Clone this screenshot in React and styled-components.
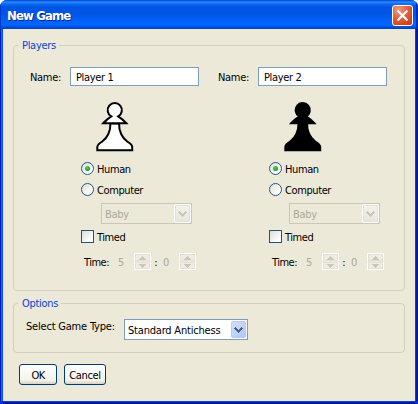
import React from "react";
import styled, { createGlobalStyle, css } from "styled-components";

const Page = createGlobalStyle`
  * { box-sizing: border-box; }
  body { margin: 0; background: #fff; overflow: hidden; }
`;

const Window = styled.div`
  width: 418px;
  height: 404px;
  display: flex;
  flex-direction: column;
  font: 11px/14px "DejaVu Sans Condensed", "DejaVu Sans", sans-serif;
  font-stretch: condensed;
  color: #000;
  background: #0831d9;
  border-radius: 7px 7px 0 0;
  overflow: hidden;
`;

const TitleBar = styled.header`
  height: 29px;
  flex: none;
  display: flex;
  align-items: center;
  justify-content: space-between;
  padding: 2px 5px 0 7px;
  background: linear-gradient(#0040d0 0, #2a8bff 2px, #0a6cf5 4px, #0054e3 7px, #0055e5 14px, #0261fc 21px, #0264ff 25px, #0050dc 27px, #003dc4 29px);
  box-shadow: inset 1px 0 #0038c8, inset -2px 0 #0030b8;
`;

const Title = styled.h1`
  margin: 0;
  padding-top: 1px;
  font: bold 13px/16px "DejaVu Sans Condensed", "DejaVu Sans", sans-serif;
  font-stretch: condensed;
  letter-spacing: -0.85px;
  color: #fff;
  text-shadow: 1px 1px #0a2a88;
`;

const CloseButton = styled.button`
  width: 21px;
  height: 21px;
  padding: 0;
  display: grid;
  place-items: center;
  border: 1px solid #fff;
  border-radius: 3px;
  background: radial-gradient(circle at 30% 20%, #f09a80 0, #e35e3c 45%, #d9401a 80%, #b83210 100%);
`;

const Client = styled.main`
  flex: 1;
  margin: 0 3px 3px;
  padding: 9px 10px 0;
  background: #ece9d8;
  box-shadow: -1px 0 #0855dd, -2px 0 #166aee, -3px 0 #0019cf, 1px 0 #0b3bd8, 2px 0 #001dae, 3px 0 #00138c, 0 1px #0441d8, 0 2px #001dae, 0 3px #00138c;
`;

const Group = styled.fieldset`
  margin: 0 0 ${p => p.$gap}px;
  padding: 0;
  width: 392px;
  height: ${p => p.$height}px;
  min-width: 0;
  border: 1px solid #d0d0bf;
  border-radius: 4px;
`;

const Legend = styled.legend`
  margin-left: 4px;
  padding: 0 3px 0 4px;
  height: 14px;
  line-height: 16px;
  color: #0046d5;
  letter-spacing: ${p => p.$track || 0}px;
`;

const PlayerColumns = styled.div`
  display: grid;
  grid-template-columns: 188px 188px;
  padding-top: 15px;
`;

const Text = styled.span`
  padding-top: 2px;
  white-space: pre;
  letter-spacing: ${p => p.$track || 0}px;
  ${p => p.$width && css`width: ${p.$width}px; flex: none;`}
  ${p => p.$muted && css`color: #aca899;`}
`;

const OptionLabel = styled(Text)`
  padding-top: 1px;
`;

const NameRow = styled.label`
  display: flex;
  align-items: center;
  height: 19px;
  padding-left: 16px;
`;

const NameInput = styled.input`
  width: 129px;
  height: 19px;
  padding: 2px 4px 0 5px;
  border: 1px solid #7f9db9;
  border-radius: 0;
  background: #fff;
  font: inherit;
  letter-spacing: -0.35px;
  color: #000;
  outline: 0;
`;

const Piece = styled.svg`
  display: block;
  width: 40px;
  height: 51px;
  margin: 16px 0 0 81px;
`;

const Choice = styled.div`
  display: flex;
  align-items: center;
  gap: 3px;
  height: 13px;
  margin: ${p => p.$top}px 0 0 67px;
`;

const Radio = styled.span`
  width: 13px;
  height: 13px;
  flex: none;
  display: grid;
  place-items: center;
  border: 1px solid #28567f;
  border-radius: 50%;
  background: linear-gradient(135deg, #dcdcd7, #fff 75%);
  &::after {
    content: "";
    width: 5px;
    height: 5px;
    border-radius: 50%;
    background: ${p => (p.$on ? "radial-gradient(circle at 40% 35%, #55d551, #21a121 65%)" : "none")};
  }
`;

const CheckBox = styled.span`
  width: 13px;
  height: 13px;
  flex: none;
  border: 1px solid #1c5180;
  background: linear-gradient(135deg, #dcdcd7, #fff 80%);
`;

const Combo = styled.div`
  display: flex;
  align-items: center;
  justify-content: space-between;
  width: ${p => p.$width}px;
  height: 21px;
  padding: 0 1px 0 3px;
  border: 1px solid ${p => (p.$disabled ? "#c9c7ba" : "#7f9db9")};
  background: ${p => (p.$disabled ? "#ece9d8" : "#fff")};
`;

const DifficultyRow = styled.div`
  margin: 7px 0 6px 87px;
`;

const ComboButton = styled.span`
  width: ${p => (p.$disabled ? 17 : 15)}px;
  height: ${p => (p.$disabled ? 19 : 17)}px;
  margin-right: ${p => (p.$disabled ? -1 : 0)}px;
  display: grid;
  place-items: center;
  border-radius: 2px;
  border: 1px solid ${p => (p.$disabled ? "#fff" : "#b7caf5")};
  background: ${p => (p.$disabled ? "linear-gradient(#f3f2eb, #e9e7da)" : "linear-gradient(135deg, #d3dffe, #aec8f7)")};
  box-shadow: ${p => (p.$disabled ? "inset 0 0 0 1px #e3e1d5" : "none")};
`;

const TimeRow = styled.div`
  display: flex;
  align-items: center;
  height: 17px;
  margin: 10px 0 0 70px;
`;

const Spinner = styled.span`
  width: 17px;
  height: 17px;
  flex: none;
  display: grid;
  grid-template-rows: 8px 8px;
  gap: 1px;
  background: #ece9d8;
`;

const SpinButton = styled.span`
  display: grid;
  place-items: center;
  border: solid #fff;
  border-width: ${p => (p.$down ? "0 1px 1px" : "1px 1px 0")};
  background: #efede3;
  box-shadow: inset 0 0 0 1px #e3e1d5;
`;

const OptionRow = styled.div`
  display: flex;
  align-items: flex-start;
  padding: 9px 0 0 12px;
`;

const Actions = styled.footer`
  display: flex;
  gap: 7px;
  padding-left: 6px;
`;

const PushButton = styled.button`
  width: ${p => p.$width}px;
  height: 21px;
  padding: 2px 0 0;
  border: 1px solid #003c74;
  border-radius: 3px;
  background: linear-gradient(#fff, #f3f2ec 80%, #d8d1c4);
  color: #000;
  font: inherit;
  letter-spacing: ${p => p.$track}px;
`;

const Chevron = ({ color }) => (
  <svg width="9" height="6" viewBox="0 0 9 6" shapeRendering="crispEdges">
    <path d="M0 1h1V0h1v1h1v1h1v1h1v-1h1v-1h1v-1h1v1h1v1h-1v1h-1v1h-1v1h-1v1h-1v-1h-1v-1h-1v-1h-1v-1h-1z" fill={color} />
  </svg>
);

const Triangle = ({ down }) => (
  <svg width="7" height="4" viewBox="0 0 7 4" shapeRendering="crispEdges">
    <path d={down ? "M0 0h7v1h-1v1h-1v1h-1v1h-1v-1h-1v-1h-1v-1h-1z" : "M3 0h1v1h1v1h1v1h1v1h-7v-1h1v-1h1v-1h1z"} fill="#c9c7ba" />
  </svg>
);

const Pawn = ({ fill }) => (
  <Piece viewBox="0 0 40 51" fill={fill} stroke="#000" strokeWidth="2" strokeLinejoin="miter">
    <path d="M15.4 21.5C15.8 29 12.2 36 7.5 39.3Q2.3 42.3 2.3 45V48.2H37.2V45Q37.2 42.3 32 39.3C27.3 36 23.7 29 24.1 21.5Z" />
    <path d="M16.3 14.4A7.1 7.1 0 1 1 23.2 14.4Q27.5 17.2 31.3 21.3H8.2Q12 17.2 16.3 14.4Z" />
  </Piece>
);

const Spin = () => (
  <Spinner>
    <SpinButton><Triangle /></SpinButton>
    <SpinButton $down><Triangle down /></SpinButton>
  </Spinner>
);

const Player = ({ name, fill }) => (
  <section>
    <NameRow>
      <Text $width={40} $track={-0.3}>Name:</Text>
      <NameInput defaultValue={name} />
    </NameRow>
    <Pawn fill={fill} />
    <Choice $top={9}><Radio $on /><Text $track={-0.4}>Human</Text></Choice>
    <Choice $top={8}><Radio /><Text $track={-0.4}>Computer</Text></Choice>
    <DifficultyRow>
      <Combo $width={91} $disabled>
        <Text $muted $track={-0.3}>Baby</Text>
        <ComboButton $disabled><Chevron color="#c9c7ba" /></ComboButton>
      </Combo>
    </DifficultyRow>
    <Choice $top={0}><CheckBox /><Text $track={-0.45}>Timed</Text></Choice>
    <TimeRow>
      <Text $width={34} $track={-0.5}>Time:</Text>
      <Text $width={16} $muted>5</Text>
      <Spin />
      <Text $width={12}> :</Text>
      <Text $width={16} $muted>0</Text>
      <Spin />
    </TimeRow>
  </section>
);

export default function App() {
  return (
    <>
      <Page />
      <Window>
        <TitleBar>
          <Title>New Game</Title>
          <CloseButton aria-label="Close">
            <svg width="13" height="13" viewBox="0 0 13 13">
              <path d="M1.5 1.5l10 10M11.5 1.5l-10 10" stroke="#fff" strokeWidth="2.2" />
            </svg>
          </CloseButton>
        </TitleBar>
        <Client>
          <Group $height={253} $gap={5}>
            <Legend $track={-0.3}>Players</Legend>
            <PlayerColumns>
              <Player name="Player 1" fill="#fff" />
              <Player name="Player 2" fill="#000" />
            </PlayerColumns>
          </Group>
          <Group $height={57} $gap={11}>
            <Legend $track={-0.3}>Options</Legend>
            <OptionRow>
              <OptionLabel $width={98} $track={-0.2}>Select Game Type:</OptionLabel>
              <Combo $width={124}>
                <Text $track={-0.2}>Standard Antichess</Text>
                <ComboButton><Chevron color="#4d6185" /></ComboButton>
              </Combo>
            </OptionRow>
          </Group>
          <Actions>
            <PushButton $width={38} $track={-0.6}>OK</PushButton>
            <PushButton $width={42} $track={-0.35}>Cancel</PushButton>
          </Actions>
        </Client>
      </Window>
    </>
  );
}
